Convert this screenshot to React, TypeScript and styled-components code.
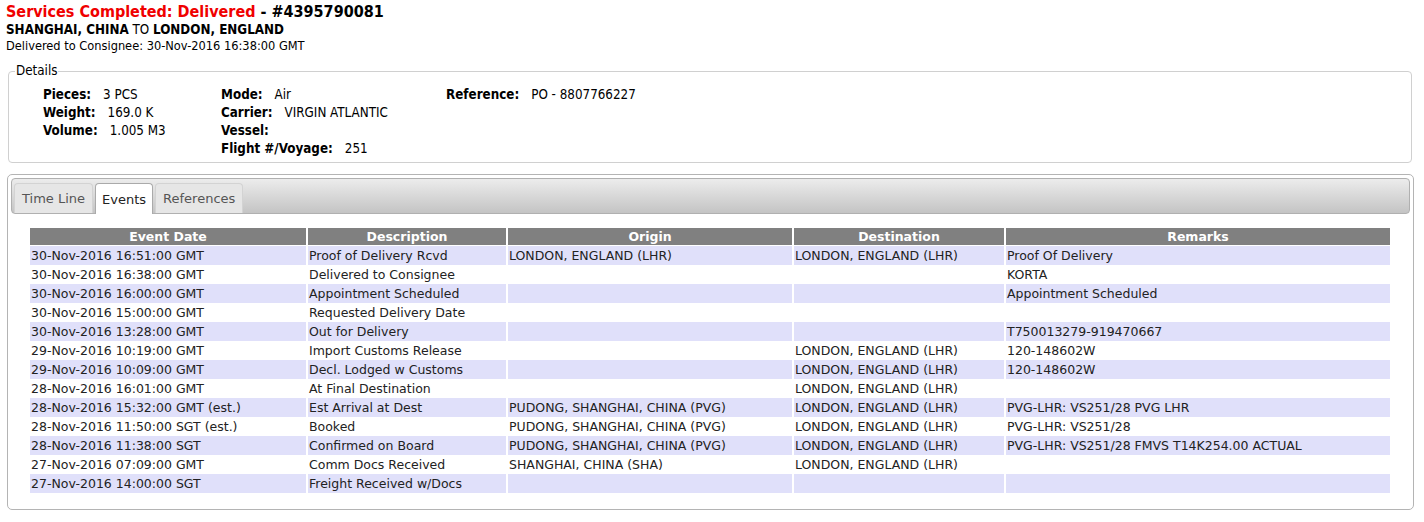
import React from 'react';
import styled, { createGlobalStyle } from 'styled-components';

const GlobalStyle = createGlobalStyle`
  html, body {
    margin: 0;
    padding: 0;
    background: #fff;
  }
  body {
    font-family: "DejaVu Sans", Verdana, sans-serif;
    color: #000;
  }
`;

const narrow = `"DejaVu Sans Condensed", "DejaVu Sans", sans-serif`;

const Page = styled.div`
  padding: 2px 7px 0 6px;
  width: 1424px;
  box-sizing: border-box;
`;

const Title = styled.div`
  font-family: ${narrow};
  font-weight: bold;
  font-size: 16px;
  line-height: 20px;
`;

const Status = styled.span`
  color: #f00000;
`;

const Route = styled.div<{ $size?: number }>`
  font-family: ${narrow};
  font-size: ${p => p.$size ?? 13.3}px;
  line-height: 16px;
  b {
    font-weight: bold;
  }
`;

const Delivered = styled(Route)`
  margin-top: 0;
`;

const Fieldset = styled.fieldset`
  margin: 8px 5px 0 2px;
  padding: 6px 0 4px 6px;
  border: 1px solid #d0d0d0;
  border-radius: 4px;
  font-family: ${narrow};
  font-size: 13.3px;
  line-height: 18px;
`;

const Legend = styled.legend`
  padding: 0 1px;
  font-size: 13.3px;
`;

const DetailGrid = styled.div`
  display: grid;
  grid-template-columns: 178px 225px auto;
  padding-left: 28px;
`;

const DetailCol = styled.div`
  display: flex;
  flex-direction: column;
`;

const Field = styled.div`
  white-space: nowrap;
  b {
    font-weight: bold;
    margin-right: 12px;
  }
`;

const TabBox = styled.div`
  margin: 11px 3px 0 1px;
  border: 1px solid #b4b4b4;
  border-radius: 5px;
  padding: 3px;
  height: 328px;
`;

const TabBar = styled.div`
  display: flex;
  gap: 2px;
  height: 30px;
  padding: 4px 0 0 2px;
  border: 1px solid #b0b0b0;
  border-radius: 4px;
  background: linear-gradient(to bottom, #ececec, #c4c4c4);
`;

const Tab = styled.div<{ $active?: boolean }>`
  padding: 0 ${p => (p.$active ? 6 : 7)}px;
  height: ${p => (p.$active ? 31 : 30)}px;
  display: flex;
  align-items: center;
  font-size: 13px;
  color: ${p => (p.$active ? '#222' : '#555')};
  background: ${p => (p.$active ? '#fff' : '#e6e6e6')};
  border: 1px solid ${p => (p.$active ? '#aaa' : '#d3d3d3')};
  border-bottom: none;
  border-radius: 4px 4px 0 0;
  box-sizing: border-box;
`;

const Panel = styled.div`
  padding: 14px 20px 0 19px;
`;

const Table = styled.table`
  width: 1364px;
  border-collapse: separate;
  border-spacing: 2px 0;
  font-size: 12.5px;
  margin-left: -2px;
`;

const Th = styled.th<{ $w: number }>`
  width: ${p => p.$w}px;
  background: #808080;
  color: #fff;
  font-weight: bold;
  height: 17px;
  padding: 0;
  line-height: 17px;
  border-bottom: 1px solid #fff;
`;

const Row = styled.tr<{ $odd: boolean }>`
  td {
    background: ${p => (p.$odd ? '#e0e0fa' : '#fff')};
  }
`;

const Td = styled.td`
  height: 19px;
  padding: 0 1px;
  line-height: 19px;
  color: #222;
  white-space: nowrap;
`;

type Event = [string, string, string, string, string];

const events: Event[] = [
  ['30-Nov-2016 16:51:00 GMT', 'Proof of Delivery Rcvd', 'LONDON, ENGLAND (LHR)', 'LONDON, ENGLAND (LHR)', 'Proof Of Delivery'],
  ['30-Nov-2016 16:38:00 GMT', 'Delivered to Consignee', '', '', 'KORTA'],
  ['30-Nov-2016 16:00:00 GMT', 'Appointment Scheduled', '', '', 'Appointment Scheduled'],
  ['30-Nov-2016 15:00:00 GMT', 'Requested Delivery Date', '', '', ''],
  ['30-Nov-2016 13:28:00 GMT', 'Out for Delivery', '', '', 'T750013279-919470667'],
  ['29-Nov-2016 10:19:00 GMT', 'Import Customs Release', '', 'LONDON, ENGLAND (LHR)', '120-148602W'],
  ['29-Nov-2016 10:09:00 GMT', 'Decl. Lodged w Customs', '', 'LONDON, ENGLAND (LHR)', '120-148602W'],
  ['28-Nov-2016 16:01:00 GMT', 'At Final Destination', '', 'LONDON, ENGLAND (LHR)', ''],
  ['28-Nov-2016 15:32:00 GMT (est.)', 'Est Arrival at Dest', 'PUDONG, SHANGHAI, CHINA (PVG)', 'LONDON, ENGLAND (LHR)', 'PVG-LHR: VS251/28 PVG LHR'],
  ['28-Nov-2016 11:50:00 SGT (est.)', 'Booked', 'PUDONG, SHANGHAI, CHINA (PVG)', 'LONDON, ENGLAND (LHR)', 'PVG-LHR: VS251/28'],
  ['28-Nov-2016 11:38:00 SGT', 'Confirmed on Board', 'PUDONG, SHANGHAI, CHINA (PVG)', 'LONDON, ENGLAND (LHR)', 'PVG-LHR: VS251/28 FMVS T14K254.00 ACTUAL'],
  ['27-Nov-2016 07:09:00 GMT', 'Comm Docs Received', 'SHANGHAI, CHINA (SHA)', 'LONDON, ENGLAND (LHR)', ''],
  ['27-Nov-2016 14:00:00 SGT', 'Freight Received w/Docs', '', '', ''],
];

const columns: [string, number][] = [
  ['Event Date', 276],
  ['Description', 198],
  ['Origin', 284],
  ['Destination', 210],
  ['Remarks', 384],
];

export default function App() {
  return (
    <>
      <GlobalStyle />
      <Page>
        <Title>
          <Status>Services Completed: Delivered</Status> - #4395790081
        </Title>
        <Route>
          <b>SHANGHAI, CHINA</b> TO <b>LONDON, ENGLAND</b>
        </Route>
        <Delivered $size={12.7}>Delivered to Consignee: 30-Nov-2016 16:38:00 GMT</Delivered>

        <Fieldset>
          <Legend>Details</Legend>
          <DetailGrid>
            <DetailCol>
              <Field><b>Pieces:</b>3 PCS</Field>
              <Field><b>Weight:</b>169.0 K</Field>
              <Field><b>Volume:</b>1.005 M3</Field>
            </DetailCol>
            <DetailCol>
              <Field><b>Mode:</b>Air</Field>
              <Field><b>Carrier:</b>VIRGIN ATLANTIC</Field>
              <Field><b>Vessel:</b></Field>
              <Field><b>Flight #/Voyage:</b>251</Field>
            </DetailCol>
            <DetailCol>
              <Field><b>Reference:</b>PO - 8807766227</Field>
            </DetailCol>
          </DetailGrid>
        </Fieldset>

        <TabBox>
          <TabBar>
            <Tab>Time Line</Tab>
            <Tab $active>Events</Tab>
            <Tab>References</Tab>
          </TabBar>
          <Panel>
            <Table>
              <thead>
                <tr>
                  {columns.map(([label, w]) => (
                    <Th key={label} $w={w}>{label}</Th>
                  ))}
                </tr>
              </thead>
              <tbody>
                {events.map((ev, i) => (
                  <Row key={i} $odd={i % 2 === 0}>
                    {ev.map((cell, j) => (
                      <Td key={j}>{cell}</Td>
                    ))}
                  </Row>
                ))}
              </tbody>
            </Table>
          </Panel>
        </TabBox>
      </Page>
    </>
  );
}
